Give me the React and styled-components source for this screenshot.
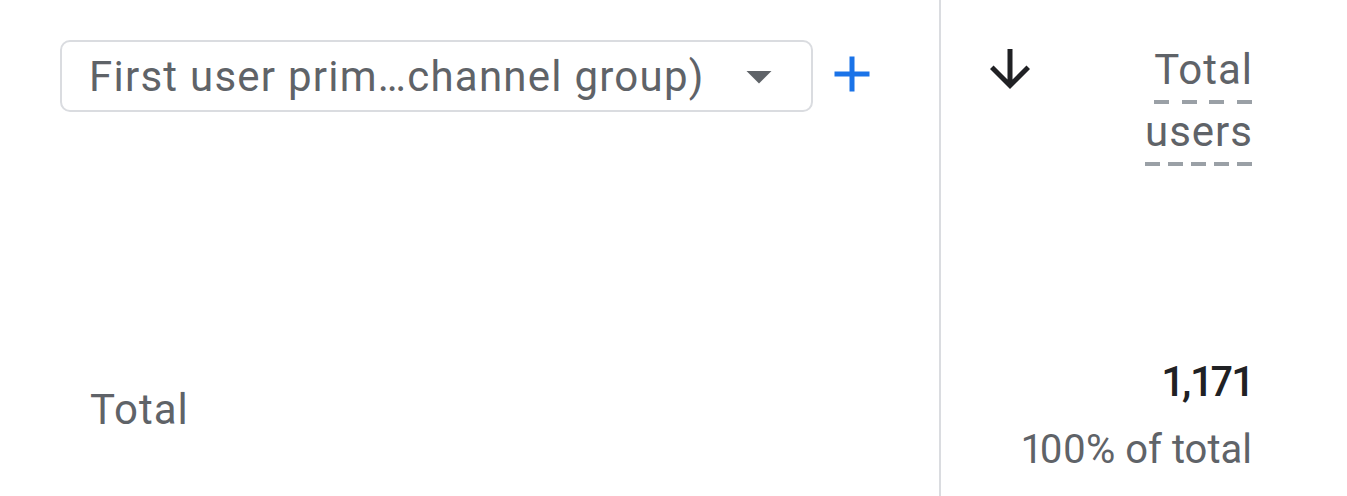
import React from 'react';
import styled, { createGlobalStyle } from 'styled-components';

const GlobalStyle = createGlobalStyle`
  html, body {
    margin: 0;
    padding: 0;
    background: #fff;
    font-family: Roboto, "Liberation Sans", Arial, sans-serif;
  }
`

const Table = styled.div`
  display: grid;
  grid-template-columns: 939px 1fr;
  grid-template-rows: 340px 156px;
  width: 1347px;
  height: 496px;
  overflow: hidden;
`

const Cell = styled.div`
  box-sizing: border-box;
  border-left: ${props => props.divider ? '2px solid #dadce0' : 'none'};
`

const HeadLeft = styled(Cell)`
  display: flex;
  align-items: flex-start;
  padding: 40px 0 0 60px;
  gap: 9px;
`

const Dropdown = styled.div`
  box-sizing: border-box;
  width: 753px;
  height: 72px;
  border: 2px solid #dadce0;
  border-radius: 10px;
  display: flex;
  align-items: center;
  padding: 0 22px 0 27px;
  color: #5f6368;
  font-size: 42px;
  letter-spacing: 1.25px;
  cursor: pointer;
`

const DropdownLabel = styled.span`
  flex: 1;
  white-space: nowrap;
`

const Icon = styled.svg`
  width: ${props => props.size || 60}px;
  height: ${props => props.size || 60}px;
  flex: none;
  fill: ${props => props.color || '#5f6368'};
`

const AddButton = styled.button`
  border: none;
  background: none;
  padding: 0;
  margin-top: 4px;
  display: flex;
  cursor: pointer;
`

const HeadRight = styled(Cell)`
  display: flex;
  justify-content: space-between;
  align-items: flex-start;
  padding: 39px 95px 0 39px;
`

const MetricTitle = styled.div`
  display: flex;
  flex-direction: column;
  align-items: flex-end;
  gap: 5px;
  padding-top: 8px;
  color: #5f6368;
`

const Word = styled.div`
  display: flex;
  flex-direction: column;
  align-items: stretch;
`

const WordText = styled.span`
  font-size: 42px;
  line-height: 46px;
  letter-spacing: 1px;
  margin-right: -1px;
`

const DashRow = styled.span`
  display: flex;
  justify-content: space-between;
  margin-top: 7px;
  height: 4px;
`

const Dash = styled.span`
  width: 15px;
  height: 4px;
  background: #9aa0a6;
`

const BodyLeft = styled(Cell)`
  padding: 45px 0 0 90px;
  font-size: 42px;
  line-height: 50px;
  letter-spacing: 1px;
  color: #5f6368;
`

const BodyRight = styled(Cell)`
  padding: 17px 95px 0 0;
  text-align: right;
  font-variant-numeric: proportional-nums;
`

const TotalValue = styled.div`
  font-size: 42px;
  line-height: 50px;
  font-weight: 500;
  color: #202124;
`

const TotalShare = styled.div`
  margin-top: 18px;
  font-size: 40px;
  line-height: 50px;
  color: #5f6368;
`

const Underlined = ({ children, dashes }) => (
  <Word>
    <WordText>{children}</WordText>
    <DashRow>
      {Array.from({ length: dashes }, (_, i) => <Dash key={i} />)}
    </DashRow>
  </Word>
)

export default function App() {
  return (
    <>
      <GlobalStyle />
      <Table>
        <HeadLeft>
          <Dropdown>
            <DropdownLabel>First user prim…channel group)</DropdownLabel>
            <Icon viewBox="0 0 24 24">
              <path d="M7 10l5 5 5-5z" />
            </Icon>
          </Dropdown>
          <AddButton aria-label="Add dimension">
            <Icon viewBox="0 0 24 24" color="#1a73e8">
              <path d="M19 13h-6v6h-2v-6H5v-2h6V5h2v6h6v2z" />
            </Icon>
          </AddButton>
        </HeadLeft>
        <HeadRight divider>
          <Icon viewBox="0 0 24 24" color="#202124">
            <path d="M20 12l-1.41-1.41L13 16.17V4h-2v12.17l-5.58-5.59L4 12l8 8 8-8z" />
          </Icon>
          <MetricTitle>
            <Underlined dashes={4}>Total</Underlined>
            <Underlined dashes={5}>users</Underlined>
          </MetricTitle>
        </HeadRight>
        <BodyLeft>Total</BodyLeft>
        <BodyRight divider>
          <TotalValue>1,171</TotalValue>
          <TotalShare>100% of total</TotalShare>
        </BodyRight>
      </Table>
    </>
  );
}
